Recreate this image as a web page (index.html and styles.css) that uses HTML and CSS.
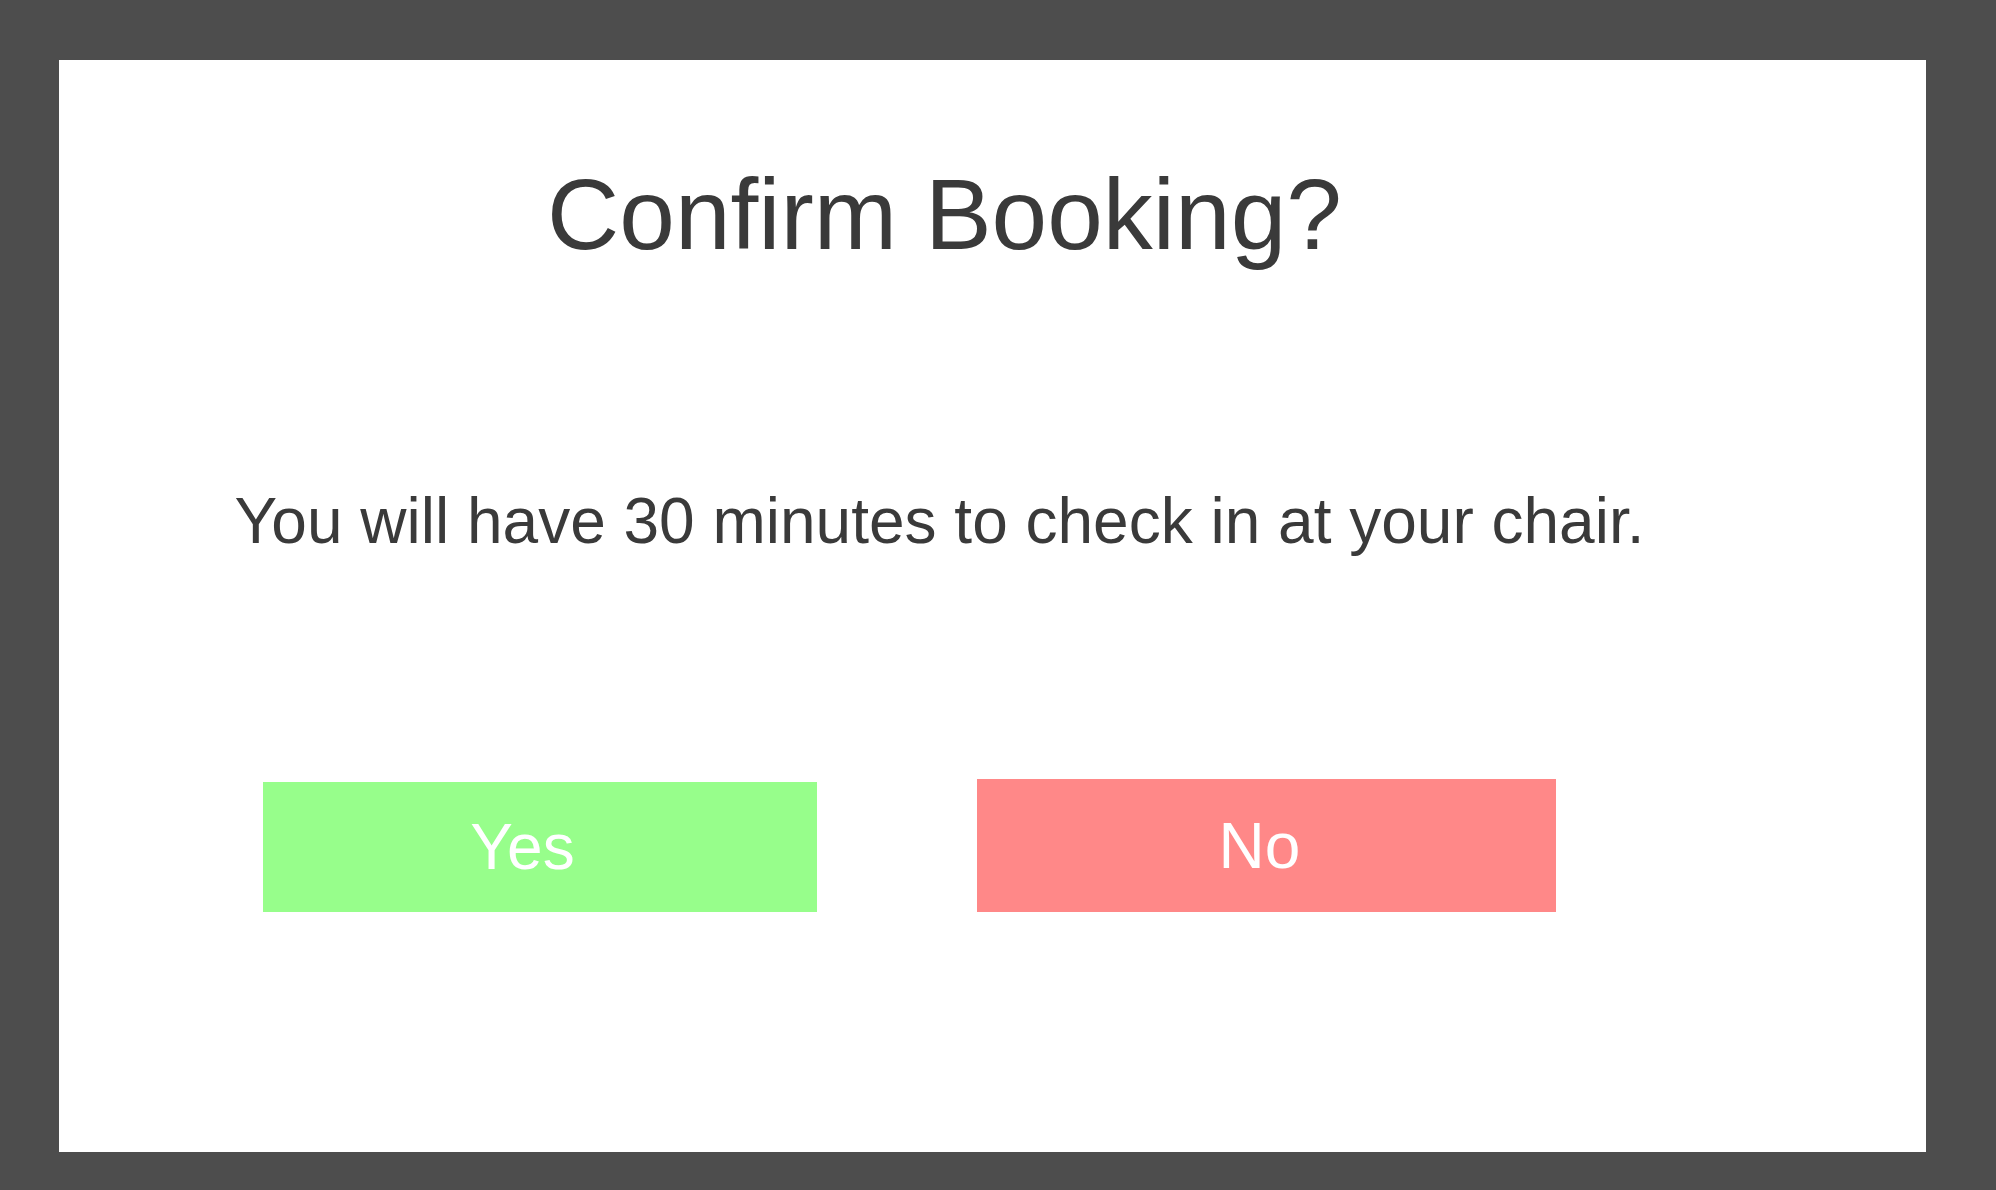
FILE: index.html
```html
<!DOCTYPE html>
<html lang="en">
<head>
<meta charset="utf-8">
<title>Confirm Booking</title>
<link rel="stylesheet" href="styles.css">
</head>
<body>
<div class="dialog">
  <h1 class="title">Confirm Booking?</h1>
  <p class="message">You will have 30 minutes to check in at your chair.</p>
  <div class="actions">
    <button class="btn btn-yes">Yes</button>
    <button class="btn btn-no">No</button>
  </div>
</div>
</body>
</html>
```

FILE: styles.css
```css
html, body {
  margin: 0;
  padding: 0;
  background: #4d4d4d;
  font-family: "Liberation Sans", Arial, Helvetica, sans-serif;
}

body {
  width: 1996px;
  height: 1190px;
  overflow: hidden;
}

.dialog {
  box-sizing: border-box;
  margin: 60px 0 0 59px;
  width: 1867px;
  height: 1092px;
  background: #ffffff;
  padding: 104px 106px 0 0;
  color: #3a3a3a;
}

.title {
  margin: 0;
  font-size: 100px;
  line-height: 100px;
  font-weight: normal;
  text-align: center;
  padding-left: 10px;
}

.message {
  margin: 225px 0 0 0;
  font-size: 64px;
  line-height: 64px;
  text-align: center;
}

.actions {
  display: flex;
  align-items: flex-end;
  gap: 160px;
  margin-top: 226px;
  padding-left: 204px;
}

.btn {
  border: none;
  margin: 0;
  font-family: inherit;
  font-size: 64px;
  color: #ffffff;
  text-align: center;
  cursor: pointer;
}

.btn-yes {
  width: 554px;
  height: 130px;
  background: #97fe8b;
  padding: 0 35px 0 0;
}

.btn-no {
  width: 579px;
  height: 133px;
  background: #ff8888;
  padding: 0 14px 0 0;
}
```
